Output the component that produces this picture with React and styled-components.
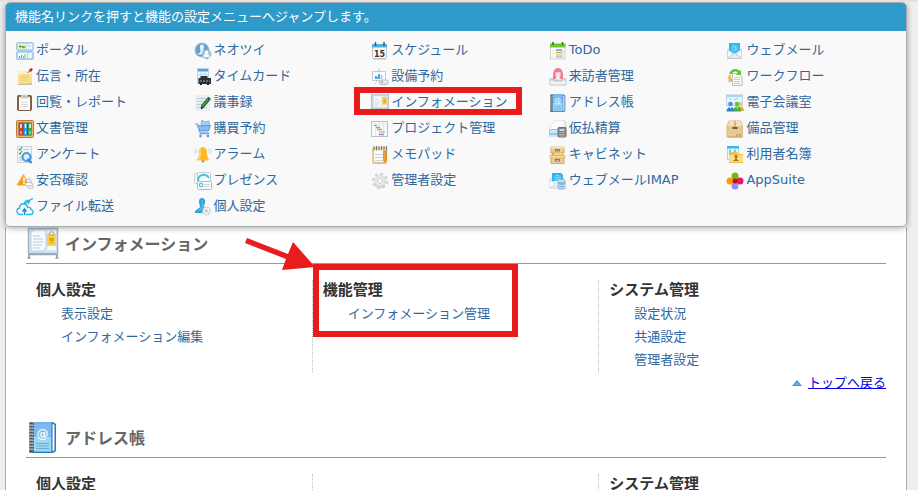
import React from "react";
import styled, { createGlobalStyle } from "styled-components";

const icons = {
  portal: (
    <>
      <rect x="0.5" y="0.5" width="17" height="8" rx="1" fill="#b9dcf8" stroke="#a3cbec" />
      <rect x="2" y="2" width="8" height="5" fill="#e2f0a8" />
      <rect x="2" y="2" width="8" height="1.500" fill="#fff2a8" />
      <path d="M3 4.500h2.500M6 5h3" stroke="#4c8d3c" strokeWidth="1.500" />
      <rect x="11" y="2" width="5" height="5" fill="#eef7ff" />
      <path d="M12 4h3" stroke="#a9cdea" />
      <rect x="0.5" y="9.500" width="17" height="8" rx="1" fill="#a9d3f5" stroke="#a3cbec" />
      <rect x="2" y="11" width="9" height="5" fill="#fff" />
      <path d="M3.500 16v-2M5.500 16v-3" stroke="#2d9edb" />
      <path d="M7.500 16v-2" stroke="#f39a25" />
      <path d="M9 16v-4" stroke="#64b53a" />
      <rect x="12" y="11" width="4" height="5" fill="#eef7ff" />
    </>
  ),
  message: (
    <>
      <path d="M2 3h14v14H2z" fill="#c9c2aa" />
      <path d="M2 3h14v12l-14 1z" fill="#fbe08c" />
      <path d="M2 3h14v4H2z" fill="#ffeeb5" />
      <path d="M5 7h8M5 9.500h7M5 12h8" stroke="#ecc868" />
      <path d="M11.500 5l2-2" stroke="#777" />
      <path d="M12.500 2.500L15 0l2 1-2 3z" fill="#d9202b" />
    </>
  ),
  report: (
    <>
      <rect x="1.500" y="1.500" width="14" height="15" rx="1" fill="#8b6348" stroke="#7d5a45" />
      <rect x="3" y="3" width="11" height="13" fill="#fafafa" />
      <path d="M5 8.500h7M5 10.500h7M5 12.500h7" stroke="#dcdcdc" />
      <path d="M4.500 4l1.500-3h5l1.500 3z" fill="#b8bcc0" stroke="#d9d9d9" />
    </>
  ),
  documents: (
    <>
      <rect x="0.500" y="0.500" width="17" height="17" rx="1" fill="#f0b768" stroke="#bd7b35" />
      <rect x="2.500" y="2.500" width="13" height="13" fill="#6c4631" />
      <rect x="3" y="3" width="3.500" height="12" fill="#dd3a36" />
      <rect x="7.500" y="3" width="3.500" height="12" fill="#2e9fe6" />
      <rect x="12" y="3" width="3.500" height="12" fill="#34a64b" />
      <path d="M5 4v4M9.500 4v4M14 4v4" stroke="#fff" strokeWidth="1.500" />
      <path d="M5 11v3M9.500 11v3M14 11v3" stroke="#dceeff" />
    </>
  ),
  survey: (
    <>
      <path d="M1.500 0.500h14v16h-14z" fill="#f0f4f7" stroke="#ccd4db" />
      <path d="M3 3l1 1 2-3M3 7l1 1 2-3" fill="none" stroke="#3fae38" strokeWidth="1.200" />
      <path d="M7 3.500h6M3 11.500h3M3 14h3" stroke="#bec8cf" />
      <circle cx="10.500" cy="11" r="4" fill="#d9edff" stroke="#4a9de2" strokeWidth="2.200" />
      <path d="M11.500 13l4 4" stroke="#3186d2" strokeWidth="2.300" />
    </>
  ),
  safety: (
    <>
      <path d="M7.500 2.500L13 13H1z" fill="#ffad27" stroke="#f5a83a" strokeLinejoin="round" />
      <path d="M7 4L3 13h3z" fill="#ff8e12" />
      <path d="M8 5.500v4M8 10.500v1.500" stroke="#fff" strokeWidth="1.500" />
      <circle cx="13" cy="9" r="2.300" fill="#f4f4f4" stroke="#c0c0c0" />
      <rect x="9.500" y="10.500" width="7" height="4" rx="2" fill="#fafafa" stroke="#bbb" />
      <rect x="12" y="13.500" width="5" height="3" rx="1" fill="#eee" stroke="#b5b5b5" strokeWidth="0.700" />
    </>
  ),
  cloud: (
    <g fill="none" stroke="#1fb6ea" strokeWidth="1.300">
      <path d="M7 16.500H4a3.300 3.300 0 0 1-.5-6.500C3.500 6.500 6 5.200 8.500 6c2 .5 3 1.500 3.200 3.500 2-.6 3.500.4 3.300 2.200 3 .6 2.700 4.800-.8 4.800H10" />
      <path d="M8 6c1-3 3-4 5-3.500L17 .500M13 2.500c-1 1.500-2.500 2-4 3.500M12 6l2-3" />
      <path d="M8.500 17v-5M6.500 13.500l2-2.500 2 2.500" stroke="#168fcb" strokeWidth="1.500" />
    </g>
  ),
  neotwi: (
    <>
      <circle cx="8" cy="8" r="7" fill="#67a4d4" stroke="#9bc0dc" />
      <path d="M3 13c0-2 2-2 3-3L5.500 5c0-4 5-4 5 0l-1 5 3 3z" fill="#e4f4fd" stroke="#4d90c4" strokeWidth="0.800" />
      <path d="M12 16l1 2 1.500-2z" fill="#9fbfd3" />
      <circle cx="12.500" cy="12" r="4.300" fill="#a5cbe4" stroke="#8fb6d0" />
      <circle cx="12.500" cy="10.500" r="1.700" fill="#fff" />
      <path d="M9.500 15c0-4 6-4 6 0z" fill="#fff" />
    </>
  ),
  timecard: (
    <>
      <rect x="3.500" y="0.500" width="11" height="15" fill="#eef6fc" stroke="#bed4e4" />
      <path d="M4 1h10v2.500H4z" fill="#4ca4e5" />
      <path d="M5 6.500h9M7 4v5M11 4v5" stroke="#b8d9ef" />
      <path d="M6.500 8h7v2H17v6H4.500v-6h2z" fill="#293137" />
      <path d="M6 13h10" stroke="#546f7b" strokeWidth="2" strokeDasharray="2 1" />
      <path d="M6 16.500h2M13 16.500h2" stroke="#111" />
    </>
  ),
  minutes: (
    <>
      <path d="M1 1h15v16H1z" fill="#e9eef1" />
      <path d="M3 4.500h10M3 7.500h8M3 10.500h5M3 13.500h10" stroke="#c0cbd2" />
      <path d="M14.500 3l2 2-6.500 8-3 2 .7-4z" fill="#267c2d" stroke="#1f3522" strokeWidth="0.600" />
      <path d="M14 5l-5.500 7" stroke="#5ab348" />
      <path d="M7 15l1-2 1 1z" fill="#111" />
    </>
  ),
  cart: (
    <>
      <path d="M7 3l1-3 3 2 4-1 .500 5H8z" fill="#a9cdf3" stroke="#86b4e5" />
      <path d="M1 4h2.500L6 13h9" fill="none" stroke="#8fbae6" strokeWidth="1.300" />
      <path d="M3.500 5.500h13l-2 5.500h-9z" fill="#74aeea" stroke="#659fdd" />
      <path d="M6 6l1 4M9.500 6v4M13 6l-1 4M4 8h11" stroke="#a5cefa" strokeWidth="0.700" />
      <path d="M6 13.500h9" stroke="#70a8e2" strokeWidth="1.500" />
      <circle cx="6.500" cy="16" r="1.400" fill="#6a9dd0" />
      <circle cx="14" cy="16" r="1.400" fill="#6a9dd0" />
    </>
  ),
  bell: (
    <>
      <path d="M9 1.500c3.500 0 3.500 3 3.500 5.500s1 5 2.500 7H3c1.500-2 2.500-4 2.500-7s0-5.500 3.500-5.500z" fill="#ffb722" stroke="#ffc653" />
      <path d="M8 2.500C6 5 8 9 5.500 13H4C6.500 10 5 3 8 2.500z" fill="#ffe17a" />
      <path d="M7 14.500h4L9 17z" fill="#d88112" />
      <path d="M2 2.500C.8 4 .8 6 1.300 8M16 2.500c1.200 1.500 1.200 3.500.7 5.500M4 3C3 4 3 5.500 3.300 7M14 3c1 1 1 2.500.7 4" fill="none" stroke="#c7d0d2" strokeWidth="0.800" />
    </>
  ),
  presence: (
    <>
      <rect x="0.500" y="1.500" width="12" height="10" rx="1" fill="#f7fafb" stroke="#c2cfd6" />
      <rect x="3.500" y="0.500" width="13" height="11" rx="1" fill="#f7fafb" stroke="#c2cfd6" />
      <path d="M4 9c0-7 8-8 11-3" fill="none" stroke="#4fc2d8" strokeWidth="2" />
      <rect x="3.500" y="9.500" width="14" height="8" rx="1" fill="#f7fafb" stroke="#acbbc4" />
      <circle cx="7" cy="13" r="1.600" fill="#fff" stroke="#4bc0dc" strokeWidth="1.200" />
      <path d="M10 12.500h6M10 14.500h5" stroke="#cbd8df" />
    </>
  ),
  personal: (
    <>
      <path d="M5 3c0-4 6-4 6 0 0 3-1 4-1 6l4 3c1 2-1 3-3 3H1c-1-3 4-4 5-6 0-2-1-3-1-6z" fill="#28a1d5" />
      <path d="M8 1c-2 2 1 5-1 8l-4 5c4-1 6-3 7-6z" fill="#54bde5" />
      <circle cx="12.500" cy="13" r="3.800" fill="#f3f3f3" stroke="#c7cbcd" strokeWidth="1.500" strokeDasharray="1.600 1" />
      <circle cx="12.500" cy="13" r="2.500" fill="#eee" />
      <circle cx="12.500" cy="13" r="1.200" fill="#bbb" />
    </>
  ),
  schedule: (
    <>
      <rect x="1.500" y="2.500" width="14" height="14" rx="1" fill="#fafafa" stroke="#c4c4c4" />
      <path d="M1 2h15v3.500H1z" fill="#56b0dc" />
      <path d="M4.500 0v4M13 0v4" stroke="#3e5566" strokeWidth="1.500" />
      <text x="8.500" y="14.500" textAnchor="middle" fontFamily="DejaVu Sans" fontSize="8" fontWeight="700" fill="#333">15</text>
      <path d="M2 17h13" stroke="#bbb" />
    </>
  ),
  equipment: (
    <>
      <path d="M1.500 3.500h13v9h-13zM8 0v3M4 16l3-4M11 12l2 4" fill="#f9fbfc" stroke="#c3ccd2" />
      <path d="M5 11V8M8 11V6" stroke="#3992d2" strokeWidth="1.700" />
      <path d="M10.500 11V7" stroke="#8ac4ea" strokeWidth="1.500" />
      <path d="M6.500 11V9" stroke="#f1a330" />
      <rect x="8.500" y="12" width="8.500" height="4.500" rx="1.500" fill="#e9ebed" stroke="#b7bbbf" />
      <circle cx="11" cy="14" r="1.200" fill="#a5b1bb" />
    </>
  ),
  gantt: (
    <>
      <rect x="0.500" y="1.500" width="16" height="15" fill="#f8fafb" stroke="#b5c1cc" />
      <path d="M1 4h15M4.500 2v14M8.500 2v14M12.500 2v14" stroke="#e2e9ee" />
      <path d="M3 5.500h3" stroke="#56b2d8" />
      <path d="M5 7.500h4" stroke="#70c543" strokeWidth="1.500" />
      <path d="M6 9.500h5" stroke="#ff8a4e" strokeWidth="1.500" />
      <path d="M8 12h6" stroke="#67c0b0" />
      <path d="M8 14.500h5" stroke="#df68b8" strokeWidth="1.500" />
    </>
  ),
  memopad: (
    <>
      <rect x="2" y="2" width="13.500" height="15" rx="1" fill="#fafaf8" stroke="#e0ad61" strokeWidth="1.300" />
      <path d="M2.500 2.500h13V4h-13z" fill="#f7dca9" />
      <path d="M3 0v4.500M5.500 0v4.500M8 0v4.500M10.500 0v4.500M13 0v4.500M15.500 0v4.500" stroke="#85786a" />
      <path d="M4 8.500h8M4 11.500h8M4 14.500h8" stroke="#cbd4db" />
      <path d="M12.500 5h2.500v9l-1.500 2.500-1-2.500z" fill="#f2a02e" stroke="#b9732d" strokeWidth="0.600" />
    </>
  ),
  gear: (
    <>
      <circle cx="9" cy="9" r="7" fill="none" stroke="#d4d4d4" strokeWidth="2.500" strokeDasharray="3 2.500" />
      <circle cx="9" cy="9" r="4.800" fill="#fff" stroke="#dfdfdf" strokeWidth="2.500" />
      <circle cx="9" cy="9" r="2.500" fill="#fff" stroke="#c6c6c6" />
      <path d="M4 13c3 3 7 3 10 0" fill="none" stroke="#c2c2c2" />
    </>
  ),
  todo: (
    <>
      <rect x="1.500" y="2.500" width="14.500" height="14.500" fill="#fafafa" stroke="#cfcfcf" />
      <path d="M1 1.500h15.500V5.500H1z" fill="#6fca32" />
      <path d="M4 0v3M13.500 0v3" stroke="#346819" strokeWidth="1.500" />
      <path d="M7 8h6" stroke="#4f9fe0" strokeWidth="1.500" />
      <path d="M7 10.500h6" stroke="#f2a338" strokeWidth="1.500" />
      <path d="M7 13h6" stroke="#f2a338" />
      <path d="M7 15h6" stroke="#5faed6" />
      <path d="M4 8.500h1M4 11.500h1M4 14.500h1M14 8v8" stroke="#d6d6d6" />
    </>
  ),
  visitor: (
    <>
      <path d="M4 11c0-6 0-11 5-11s5 5 5 11z" fill="#ef7a9d" />
      <path d="M6.500 4c2 1 3 0 5 0v4c-1 3-4 3-5 0z" fill="#ffe4da" />
      <path d="M6 12c1-3 5-3 6 0z" fill="#fff" />
      <path d="M1 12h16v5H1z" fill="#f2f4f6" stroke="#c0c7cf" />
      <path d="M.500 11h4l1 2h7l1-2h4" fill="none" stroke="#b0b9c2" />
    </>
  ),
  expense: (
    <>
      <path d="M5 1h11l1 6-2 9H0V9z" fill="#eef3f6" stroke="#c7d2d9" />
      <path d="M5 1L0 9h10l5-8z" fill="#fafcfd" />
      <path d="M0 9h10v6H0z" fill="#8fcbf3" />
      <path d="M1 10h8v3H1z" fill="#c9e8fc" />
      <rect x="9" y="7.500" width="8" height="9.500" rx="1" fill="#7d8387" stroke="#6c7277" />
      <path d="M10.500 9h5v2h-5z" fill="#c9d6dc" />
      <path d="M10.500 12.500h5M10.500 14.500h5M10.500 16h5" stroke="#d7dadd" strokeDasharray="1 1" />
      <path d="M15 14v2.500" stroke="#ed7540" />
    </>
  ),
  cabinet: (
    <>
      <path d="M2 1h13v6H2zM2 11h13v6.500H2z" fill="#edcb92" stroke="#d2ac72" />
      <path d="M2 .500h13v2H2z" fill="#f9e2b6" />
      <path d="M3 7h11l1 3H2z" fill="#d9a95c" />
      <path d="M5 7h9l-1 3H5z" fill="#ffd44f" />
      <path d="M1 9.500h15v2.500H1z" fill="#f6dba9" stroke="#d2ac72" strokeWidth="0.700" />
      <rect x="6.500" y="3.500" width="4" height="1.500" fill="#eef2f3" stroke="#6e6250" strokeWidth="0.800" />
      <rect x="6.500" y="13.500" width="4" height="1.500" fill="#eef2f3" stroke="#6e6250" strokeWidth="0.800" />
    </>
  ),
  imap: (
    <>
      <path d="M1 7l7-5 7 5v9H1z" fill="#edf3f7" stroke="#c3d2dc" />
      <path d="M3 1h9l2 2v6H3z" fill="#30b2ec" />
      <text x="8.500" y="8" textAnchor="middle" fontFamily="DejaVu Sans" fontSize="7" fill="#b9ecff">@</text>
      <path d="M1 8l6 4-6 4" fill="#fafcfd" stroke="#c9d7e0" />
      <path d="M8.500 9v7c0 2 8 2 8 0V9z" fill="#85b4d7" />
      <ellipse cx="12.500" cy="9" rx="4" ry="1.700" fill="#c3dff1" stroke="#86b0d0" strokeWidth="0.700" />
      <path d="M8.500 12c1 2 7 2 8 0M8.500 14.500c1 2 7 2 8 0" fill="none" stroke="#d6ebfa" />
    </>
  ),
  mail: (
    <>
      <path d="M1.500 8L8.500 4l7 4v8.500h-14z" fill="#e3ecf2" stroke="#b9c8d3" />
      <path d="M3 1h11v7l-5.500 4L3 8z" fill="#2cb9f0" />
      <text x="8.500" y="8" textAnchor="middle" fontFamily="DejaVu Sans" fontSize="7" fill="#a5e6fc">@</text>
      <path d="M1.500 8l6 4-6 4.500zM15.500 8l-6 4 6 4.500z" fill="#f5f9fb" stroke="#cdd8e0" />
      <path d="M1.500 16.500l7-5.500 7 5.500z" fill="#e6ecf4" stroke="#bcc8d3" />
    </>
  ),
  workflow: (
    <>
      <path d="M6.500 5.500h7l2.500 3v9H6.500z" fill="#fafafa" stroke="#b9bebf" />
      <path d="M8 9.500h6M8 11.500h6M8 13.500h6M8 15.500h6" fill="none" stroke="#c2cbd0" />
      <path d="M3 6C5 0 11 0 14 3l1-1v5h-5l2-2C9 2.500 7 3.500 6 6z" fill="#5cc832" />
      <path d="M3 7c-1 2-1 4 0 5.500L1.500 14H6v-4l-1 1V7z" fill="#f4b745" />
    </>
  ),
  meeting: (
    <>
      <rect x="0.500" y="1" width="16" height="10.500" fill="#e8f4fc" stroke="#bcd4e5" />
      <path d="M.500 2h16" stroke="#9cc8e8" strokeWidth="1.500" />
      <path d="M3 5h2M8 6l4-2" fill="none" stroke="#91c7e8" />
      <circle cx="4.500" cy="10" r="2.300" fill="#3e94e2" />
      <path d="M.500 17.500c0-6 8-6 8 0z" fill="#2f80d0" />
      <circle cx="14" cy="10" r="2" fill="#f3c24b" />
      <path d="M12 17c0-6 6-6 6 0z" fill="#efa838" />
      <circle cx="11" cy="10" r="2.300" fill="#6ac346" />
      <path d="M7.500 17.500c0-7 7.500-7 7.500 0z" fill="#4caf35" />
      <path d="M3.800 13l.7 2.500.7-2.500zM10.500 13l.7 2.500.7-2.500z" fill="#dff4ff" />
    </>
  ),
  box: (
    <>
      <path d="M3 1h12l1.500 5v11H1V6z" fill="#e9c88f" stroke="#dbb985" />
      <path d="M3 1h12l1 5H2z" fill="#f4dfb8" />
      <path d="M8 1h2v6H8z" fill="#d9b57e" />
      <path d="M6.500 8h5" stroke="#46372c" strokeWidth="1.500" />
      <path d="M10 15h2M13 15h2" stroke="#c09b70" strokeWidth="1.500" />
      <path d="M2 17h14" stroke="#c9a777" />
    </>
  ),
  userlist: (
    <>
      <rect x="1.500" y="0.500" width="11" height="13" fill="#ecf7fc" stroke="#b8d3e2" />
      <path d="M1 0h12v2.500H1z" fill="#2fbdf0" />
      <path d="M4 3.500v5M9 3.500v4" stroke="#45bce8" strokeWidth="1.500" />
      <path d="M3 9l3-3h5l1 2h5v9H3z" fill="#f2bd40" />
      <path d="M3 9h14v7H3z" fill="#ffdc82" />
      <circle cx="10" cy="10.500" r="1.500" fill="#8d6d40" />
      <path d="M7.500 15v-1c2 0 1.500-2 2.500-2s.5 2 2.500 2v1z" fill="#8d6d40" />
    </>
  ),
  appsuite: (
    <>
      <circle cx="9" cy="4" r="3.500" fill="#72ba12" />
      <circle cx="4" cy="9" r="3.500" fill="#ff9b00" />
      <circle cx="14" cy="9" r="3.500" fill="#ef1764" />
      <circle cx="9" cy="14" r="3.500" fill="#8e91ff" />
      <circle cx="9" cy="9" r="2.500" fill="#c10e17" />
    </>
  ),
};

// these two are also used at 32px next to the section titles
const largeIcons = {
  information: (
    <>
      <path d="M2 1v30M30 1v30M.500 31h3M28.500 31h3" fill="none" stroke="#98adbf" strokeWidth="2" />
      <rect x="1.500" y="1.500" width="29" height="25" fill="#dbe6ef" stroke="#a1b4c4" strokeWidth="1.500" />
      <path d="M1 27.500h30" stroke="#93a7b8" strokeWidth="1.500" />
      <path d="M4 5l3-2h12v18l-3 3H4z" fill="#f8fcff" stroke="#b4cfe5" />
      <path d="M6 9h7M6 12h10M6 15h10M6 18h9M6 21h7" stroke="#b2c9db" />
      <rect x="20" y="4" width="9" height="19" fill="#f3f8fc" />
      <rect x="20" y="7" width="9" height="12" fill="#ffd345" />
      <path d="M22 7c0-3 5-3 5 0v1h-5z" fill="#f7edc4" stroke="#a8a484" />
      <path d="M22.500 11h4v3h-4zM22 16h5" fill="#d9a81d" stroke="#d4a82b" />
    </>
  ),
  address: (
    <>
      <path d="M4 1h22l3 2v27l-3 2H4z" fill="#2b78ba" />
      <path d="M25.500 2.500l2 1.500v25l-2 1.500z" fill="#f4faff" />
      <path d="M4.500 1h20v30h-20z" fill="#72b2ea" />
      <path d="M7 3h17v13H7z" fill="#7fb9f0" />
      <path d="M7 16h17v14H7z" fill="#9bd8f2" />
      <text x="15.500" y="16.500" textAnchor="middle" fontFamily="DejaVu Sans" fontSize="12" fill="#f4faff">@</text>
      <path d="M9 22.500h13M9 25h13M9 27.500h13" stroke="#6caed3" />
      <path d="M4 1v31" stroke="#6a7680" strokeWidth="3" />
      <path d="M2 3h5M2 6h5M2 9h5M2 12h5M2 15h5M2 18h5M2 21h5M2 24h5M2 27h5M2 30h5" stroke="#4c555d" strokeWidth="1.300" />
      <path d="M2 4h4M2 7h4M2 10h4M2 13h4M2 16h4M2 19h4M2 22h4M2 25h4M2 28h4" stroke="#d4dce2" strokeWidth="0.800" />
    </>
  ),
};

const menu = [
  ["portal", "ポータル"],
  ["neotwi", "ネオツイ"],
  ["schedule", "スケジュール"],
  ["todo", "ToDo"],
  ["mail", "ウェブメール"],
  ["message", "伝言・所在"],
  ["timecard", "タイムカード"],
  ["equipment", "設備予約"],
  ["visitor", "来訪者管理"],
  ["workflow", "ワークフロー"],
  ["report", "回覧・レポート"],
  ["minutes", "議事録"],
  ["information", "インフォメーション"],
  ["address", "アドレス帳"],
  ["meeting", "電子会議室"],
  ["documents", "文書管理"],
  ["cart", "購買予約"],
  ["gantt", "プロジェクト管理"],
  ["expense", "仮払精算"],
  ["box", "備品管理"],
  ["survey", "アンケート"],
  ["bell", "アラーム"],
  ["memopad", "メモパッド"],
  ["cabinet", "キャビネット"],
  ["userlist", "利用者名簿"],
  ["safety", "安否確認"],
  ["presence", "プレゼンス"],
  ["gear", "管理者設定"],
  ["imap", "ウェブメールIMAP"],
  ["appsuite", "AppSuite"],
  ["cloud", "ファイル転送"],
  ["personal", "個人設定"],
];

const sections = [
  {
    id: "information",
    title: "インフォメーション",
    back: true,
    groups: [
      { title: "個人設定", links: ["表示設定", "インフォメーション編集"] },
      { title: "機能管理", links: ["インフォメーション管理"], marked: true },
      { title: "システム管理", links: ["設定状況", "共通設定", "管理者設定"] },
    ],
  },
  {
    id: "address",
    title: "アドレス帳",
    groups: [
      { title: "個人設定", links: [] },
      { title: "", links: [] },
      { title: "システム管理", links: [] },
    ],
  },
];

const Icon = ({ name, size = 18 }) => {
  const large = largeIcons[name];
  return (
    <Svg viewBox={large ? "0 0 32 32" : "0 0 18 18"} $size={size} aria-hidden="true">
      {large || icons[name]}
    </Svg>
  );
};

const App = () => {
  return (
    <>
      <GlobalStyle />
      <Page>
        <Menu>
          <MenuTitle>機能名リンクを押すと機能の設定メニューへジャンプします。</MenuTitle>
          <MenuGrid>
            {menu.map(([id, label]) => (
              <li key={id}>
                <MenuLink href={"#" + id}>
                  <Icon name={id} />
                  <span>{label}</span>
                  {id === "information" && <LinkFrame />}
                </MenuLink>
              </li>
            ))}
          </MenuGrid>
        </Menu>

        <Main>
          {sections.map((section) => (
            <Section key={section.id} id={section.id}>
              <SectionTitle>
                <Icon name={section.id} size={32} />
                {section.title}
              </SectionTitle>
              <Groups>
                {section.groups.map((group, i) => (
                  <Group key={i}>
                    {group.title && <GroupTitle>{group.title}</GroupTitle>}
                    <LinkList>
                      {group.links.map((link) => (
                        <li key={link}>
                          <SettingLink href="#setting">{link}</SettingLink>
                        </li>
                      ))}
                    </LinkList>
                    {group.marked && (
                      <>
                        <GroupFrame />
                        <Arrow viewBox="0 0 70 34" aria-hidden="true">
                          <path d="M2 0L43 16 48 4 70 29 37 32 41 21 0 5z" fill="#e81c1c" />
                        </Arrow>
                      </>
                    )}
                  </Group>
                ))}
              </Groups>
              {section.back && (
                <BackRow>
                  <Triangle viewBox="0 0 10 6" aria-hidden="true">
                    <path d="M5 0l5 6H0z" fill="#3d98d1" />
                    <path d="M5 2l3 3H2z" fill="#62b6e6" />
                  </Triangle>
                  <BackLink href="#root">トップへ戻る</BackLink>
                </BackRow>
              )}
            </Section>
          ))}
        </Main>
      </Page>
    </>
  );
};

const GlobalStyle = createGlobalStyle`
  * {
    box-sizing: border-box;
  }
  html {
    scrollbar-width: none;
  }
  body {
    margin: 0;
    background: #efefef;
    border-top: 2px solid #e2e2e2;
    font-family: "DejaVu Sans", "Noto Sans CJK JP", sans-serif;
    font-size: 13px;
    color: #333;
  }
  ul {
    margin: 0;
    padding: 0;
    list-style: none;
  }
`;
const Page = styled.div`
  margin: 0 11px 0 5px;
  background: #fff;
`;
const Menu = styled.nav`
  position: relative;
  border: 1px solid #aaa;
  border-radius: 5px;
  background: #f9f9f9;
  box-shadow: 0 1px 6px rgba(0, 0, 0, 0.35);
`;
const MenuTitle = styled.div`
  padding: 0 9px;
  border-radius: 4px 4px 0 0;
  background: #2e9aca;
  color: #fff;
  line-height: 28px;
`;
const MenuGrid = styled.ul`
  display: grid;
  grid-template-columns: repeat(5, 1fr);
  padding: 6px 2px 7px 10px;
`;
const MenuLink = styled.a`
  position: relative;
  display: inline-flex;
  align-items: center;
  gap: 2px;
  height: 26px;
  color: #2f689f;
  line-height: 26px;
  text-decoration: none;
  vertical-align: top;
  white-space: nowrap;

  svg {
    margin-top: 2px;
  }
  &:hover {
    text-decoration: underline;
  }
`;
const LinkFrame = styled.i`
  position: absolute;
  inset: -2px -14px 0 -17px;
  border: 6px solid #e81c1c;
  pointer-events: none;
`;
const Svg = styled.svg`
  flex: none;
  width: ${(props) => props.$size}px;
  height: ${(props) => props.$size}px;
`;
const Main = styled.main`
  min-height: calc(100vh - 228px);
  padding: 0 20px;
  border: 1px solid #aaa;
  border-width: 0 1px;
`;
const Section = styled.section`
  margin-bottom: 28px;

  &:last-child {
    margin-bottom: 0;
  }
`;
const SectionTitle = styled.h2`
  display: flex;
  align-items: center;
  gap: 6px;
  height: 37px;
  margin: 0;
  padding: 0 0 4px 1px;
  border-bottom: 1px solid #999;
  color: #666;
  font-size: 16px;
`;
const Groups = styled.div`
  display: grid;
  grid-template-columns: repeat(3, 1fr);
  margin-top: 16px;
`;
const Group = styled.div`
  position: relative;
  padding: 0 0 2px 10px;

  &:not(:last-child) {
    border-right: 1px dotted #bbb;
  }
`;
const GroupTitle = styled.h3`
  margin: 0 0 2px;
  font-size: 15px;
  line-height: 20px;
`;
const LinkList = styled.ul`
  padding-left: 25px;
`;
const SettingLink = styled.a`
  display: block;
  color: #2f689f;
  line-height: 23px;
  text-decoration: none;

  &:hover {
    text-decoration: underline;
  }
`;
const GroupFrame = styled.i`
  position: absolute;
  top: -16px;
  left: 0;
  width: 205px;
  height: 73px;
  border: 6px solid #e81c1c;
  pointer-events: none;
`;
const Arrow = styled.svg`
  position: absolute;
  top: -42px;
  left: -68px;
  width: 70px;
  height: 34px;
`;
const BackRow = styled.div`
  display: flex;
  justify-content: flex-end;
  align-items: center;
  gap: 6px;
  line-height: 20px;
`;
const Triangle = styled.svg`
  width: 10px;
  height: 6px;
`;
const BackLink = styled.a`
  color: #0000ee;
`;

export default App;
